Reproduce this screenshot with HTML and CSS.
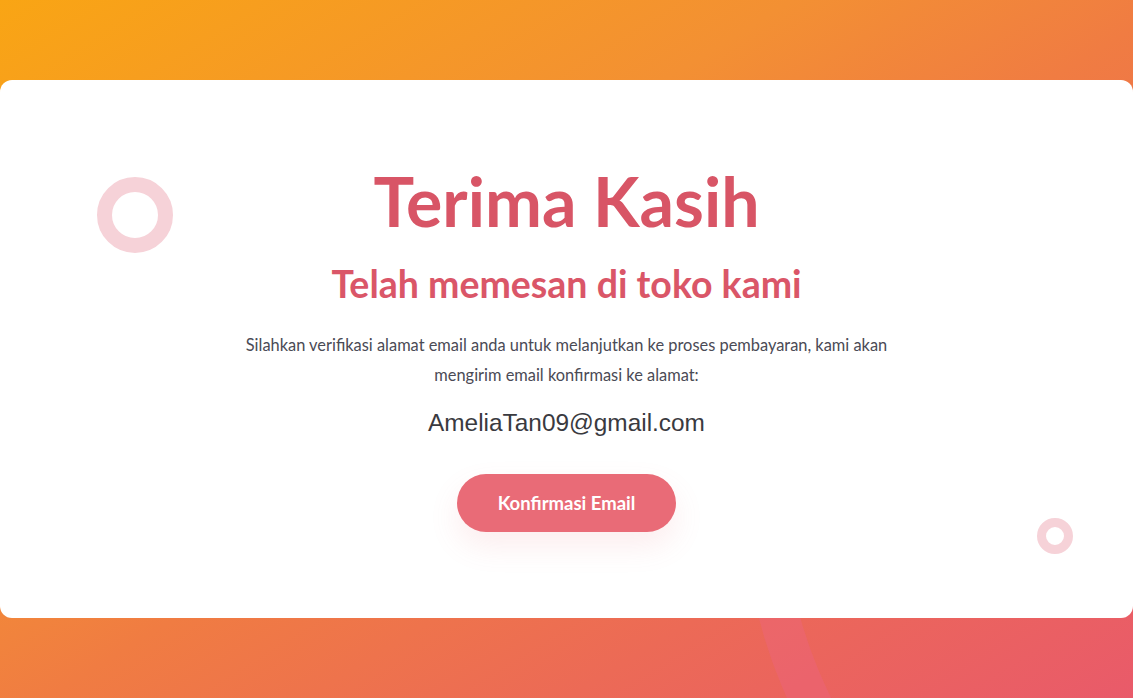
FILE: index.html
```html
<!DOCTYPE html>
<html lang="id">
<head>
<meta charset="utf-8">
<title>Terima Kasih</title>
<link rel="stylesheet" href="styles.css">
</head>
<body>
<div class="bg">
  <div class="arc"></div>
  <main class="card">
    <span class="ring ring-big"></span>
    <span class="ring ring-small"></span>
    <h1 class="title">Terima Kasih</h1>
    <h2 class="subtitle">Telah memesan di toko kami</h2>
    <p class="desc">Silahkan verifikasi alamat email anda untuk melanjutkan ke proses pembayaran, kami akan mengirim email konfirmasi ke alamat:</p>
    <p class="email">AmeliaTan09@gmail.com</p>
    <button class="btn" type="button">Konfirmasi Email</button>
  </main>
</div>
</body>
</html>
```

FILE: styles.css
```css
* { box-sizing: border-box; }
html, body { margin: 0; padding: 0; }
body {
  width: 1133px;
  height: 698px;
  overflow: hidden;
  font-family: "Lato", "Open Sans", sans-serif;
}
.bg {
  position: relative;
  width: 1133px;
  height: 698px;
  padding-top: 80px;
  background: linear-gradient(to bottom right, #f9a514 0%, #f39033 35%, #f07c42 52%, #ec6a56 75%, #e95a6a 100%);
  overflow: hidden;
}
.arc {
  position: absolute;
  left: 743px;
  top: -7px;
  width: 1000px;
  height: 1000px;
  border-radius: 50%;
  border: 40px solid transparent;
  border-left-color: rgba(236, 100, 140, 0.32);
}
.card {
  position: relative;
  z-index: 1;
  height: 538px;
  background: #fff;
  border-radius: 12px;
  display: flex;
  flex-direction: column;
  align-items: center;
  padding-top: 81px;
}
.ring {
  position: absolute;
  border-radius: 50%;
  border-style: solid;
  border-color: #f6d2d8;
}
.ring-big {
  left: 97px;
  top: 97px;
  width: 76px;
  height: 76px;
  border-width: 15px;
}
.ring-small {
  left: 1037px;
  top: 438px;
  width: 36px;
  height: 36px;
  border-width: 9px;
}
.title {
  margin: 0;
  font-family: "Lato", sans-serif;
  font-weight: 700;
  font-size: 68px;
  line-height: 80px;
  color: #d85566;
}
.subtitle {
  margin: 21px 0 0;
  font-family: "Lato", sans-serif;
  font-weight: 700;
  font-size: 37.5px;
  line-height: 44px;
  color: #da5668;
}
.desc {
  margin: 24px 0 0;
  width: 670px;
  text-align: center;
  font-family: "Lato", sans-serif;
  font-size: 16.4px;
  line-height: 30px;
  color: #4a4a55;
}
.email {
  margin: 18px 0 0;
  font-family: "Liberation Sans", "Roboto", sans-serif;
  font-size: 24.4px;
  line-height: 30px;
  color: #3a3a3f;
}
.btn {
  margin-top: 36px;
  width: 219px;
  height: 58px;
  border: none;
  border-radius: 29px;
  background: #e96b77;
  color: #fff;
  font-family: "Lato", sans-serif;
  font-weight: 700;
  font-size: 18.5px;
  box-shadow: 0 14px 30px rgba(233, 107, 119, 0.12);
}
```
